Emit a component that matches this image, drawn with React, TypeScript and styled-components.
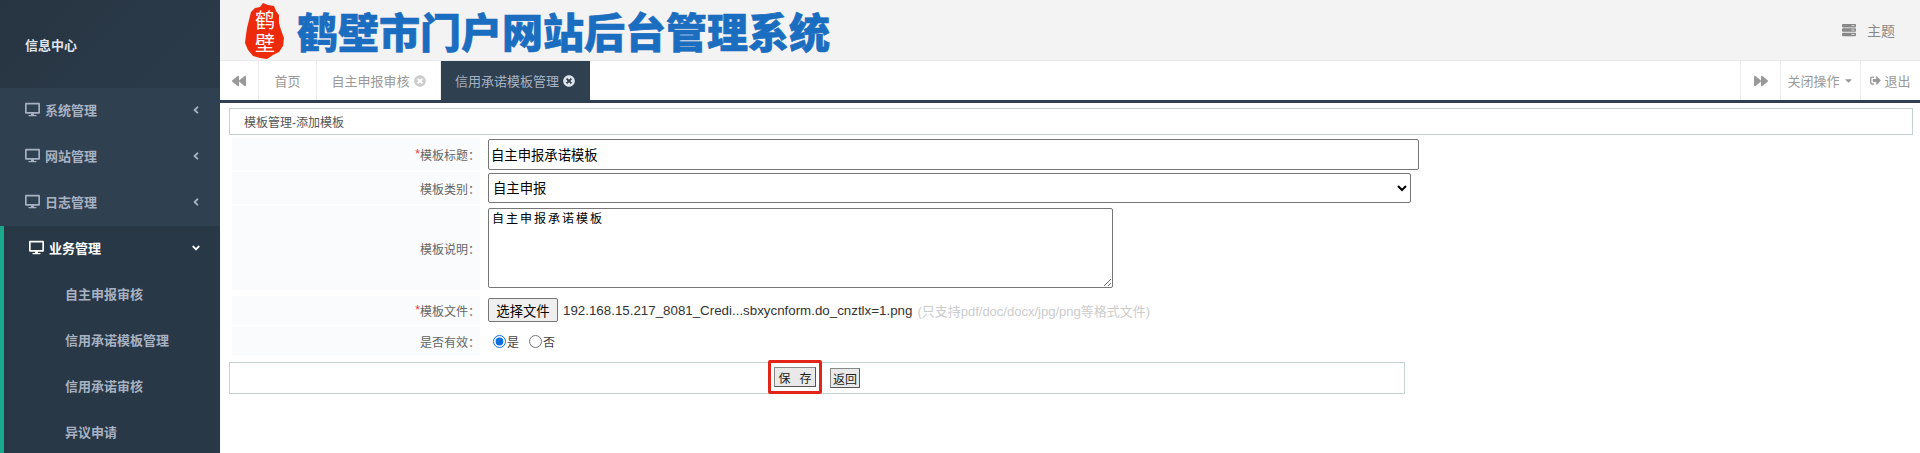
import { createGlobalStyle, styled } from 'styled-components'
import { FaDesktop, FaBackward, FaForward, FaTimesCircle, FaSignOutAlt, FaAngleLeft, FaAngleDown, FaServer, FaCaretDown } from 'react-icons/fa'

const GlobalStyle = createGlobalStyle`
  html, body {
    margin: 0;
    padding: 0;
    height: 100%;
    overflow: hidden;
    background: #fff;
    font-family: "Liberation Sans", "Noto Sans CJK SC", sans-serif;
    font-size: 12px;
    color: #676a6c;
  }
  * { box-sizing: border-box; }
`

const Page = styled.div`
  display: flex;
  width: 1920px;
  height: 453px;
  overflow: hidden;
`

const Sidebar = styled.nav`
  width: 220px;
  flex: none;
  background: #2f4050;
`

const NavHeader = styled.div`
  height: 88px;
  padding: 37px 25px 0;
  background: linear-gradient(135deg, #273441 0%, #2a3948 60%, #2b3a49 100%);
  color: #dfe4ed;
  font-size: 13px;
  font-weight: 700;
  line-height: 18px;
`

const NavItem = styled.div<{ $active?: boolean }>`
  height: 46px;
  display: flex;
  align-items: center;
  padding: 0 18px 3px 25px;
  font-size: 13px;
  font-weight: 700;
  color: ${(p) => (p.$active ? '#fff' : '#a7b1c2')};
  gap: 5px;
  svg:first-child { font-size: 15px; }
  span { flex: 1; }
  svg:last-child { font-size: 12px; }
`

const ActiveGroup = styled.div`
  border-left: 4px solid #19aa8d;
  background: #293846;
`

const SubItem = styled.div`
  height: 46px;
  padding: 0 0 3px 61px;
  display: flex;
  align-items: center;
  font-size: 13px;
  font-weight: 700;
  color: #a7b1c2;
`

const Main = styled.main`
  flex: 1;
  min-width: 0;
  display: flex;
  flex-direction: column;
`

const Header = styled.header`
  height: 61px;
  flex: none;
  display: flex;
  align-items: center;
  padding: 0 25px 0 24px;
  background: #f3f3f4;
  border-bottom: 1px solid #e7eaec;
`

const Seal = styled.svg`
  width: 41px;
  height: 60px;
  flex: none;
`

const SealText = styled.text`
  writing-mode: vertical-rl;
  font-family: "Noto Sans CJK SC", sans-serif;
  font-size: 20px;
  letter-spacing: 3px;
  fill: #fff;
`

const SiteTitle = styled.h1`
  margin: 0 0 1px 12px;
  font-family: "Noto Sans CJK SC", sans-serif;
  font-size: 41px;
  line-height: 50px;
  font-weight: 900;
  color: #1a6dbf;
  -webkit-text-stroke: 0.6px #1a6dbf;
  white-space: nowrap;
  flex: 1;
`

const ThemeLink = styled.div`
  display: flex;
  align-items: center;
  gap: 11px;
  color: #888;
  font-size: 14px;
  svg { font-size: 14px; }
`

const TabBar = styled.div`
  height: 42px;
  flex: none;
  display: flex;
  background: #fff;
  border-bottom: 3px solid #2f4050;
`

const TabArrow = styled.div<{ $width: number }>`
  width: ${(p) => p.$width}px;
  flex: none;
  display: flex;
  align-items: center;
  justify-content: center;
  color: #999;
  font-size: 14px;
  border-right: 1px solid #eee;
`

const Tab = styled.div<{ $active?: boolean; $width: number }>`
  width: ${(p) => p.$width}px;
  flex: none;
  display: flex;
  align-items: center;
  justify-content: center;
  gap: 4px;
  font-size: 13px;
  color: ${(p) => (p.$active ? '#a7b1c2' : '#999')};
  background: ${(p) => (p.$active ? '#2f4050' : '#fff')};
  border-right: 1px solid ${(p) => (p.$active ? '#2f4050' : '#eee')};
  svg { font-size: 12px; color: ${(p) => (p.$active ? '#dde3ea' : '#ccc')}; }
`

const TabSpacer = styled.div`
  flex: 1;
  border-right: 1px solid #eee;
`

const RightAction = styled.div<{ $width: number }>`
  width: ${(p) => p.$width}px;
  flex: none;
  display: flex;
  align-items: center;
  justify-content: center;
  gap: 3px;
  color: #999;
  font-size: 13px;
  border-right: 1px solid #eee;
  &:last-child { border-right: none; }
  svg { font-size: 11px; }
`

const Content = styled.section`
  flex: 1;
  padding: 5px 7px 0 9px;
  background: #fff;
`

const Crumb = styled.div`
  height: 27px;
  display: flex;
  align-items: center;
  padding-left: 14px;
  border: 1px solid #c3d1d1;
  font-size: 12px;
  color: #555;
`

const Form = styled.form`
  margin-top: 3px;
`

const Row = styled.div<{ $height: number; $gap?: number }>`
  display: grid;
  grid-template-columns: 248px 1fr;
  column-gap: 8px;
  height: ${(p) => p.$height}px;
  margin-bottom: ${(p) => p.$gap ?? 2}px;
  padding-left: 3px;
`

const Label = styled.label`
  display: flex;
  align-items: center;
  justify-content: flex-end;
  background: #f9fbfc;
  font-size: 12px;
  color: #666;
  em { font-style: normal; color: #e33; }
`

const Field = styled.div`
  display: flex;
  align-items: center;
  font-size: 12px;
  color: #333;
`

const TextInput = styled.input`
  width: 931px;
  height: 31px;
  padding: 0 2px;
  border: 1px solid #767676;
  border-radius: 2px;
  font-family: inherit;
  font-size: 13.33px;
  color: #000;
  outline: none;
`

const Select = styled.select`
  width: 923px;
  height: 30px;
  padding-left: 0;
  border: 1px solid #767676;
  border-radius: 2px;
  background: #fff;
  font-family: inherit;
  font-size: 13.33px;
  color: #000;
`

const TextArea = styled.textarea`
  width: 625px;
  height: 80px;
  padding: 2px 3px;
  border: 1px solid #767676;
  border-radius: 2px;
  font-family: "Noto Sans CJK SC", sans-serif;
  font-size: 12px;
  letter-spacing: 2px;
  line-height: 14px;
  color: #000;
  outline: none;
`

const FileButton = styled.button`
  width: 70px;
  height: 24px;
  padding: 0;
  border: 1px solid #767676;
  border-radius: 2px;
  background: #efefef;
  font-family: inherit;
  font-size: 13.33px;
  color: #000;
`

const FileName = styled.span`
  margin-left: 5px;
  font-size: 13.33px;
  color: #333;
`

const Hint = styled.span`
  margin-left: 5px;
  color: #ccc;
  font-size: 13px;
`

const Radio = styled.input`
  width: 13px;
  height: 13px;
  margin: 0 1px 0 5px;
  accent-color: #0f6fdc;
`

const RadioText = styled.span`
  font-size: 12px;
  color: #444;
  margin-right: 5px;
`

const Actions = styled.div`
  width: 1176px;
  height: 32px;
  display: flex;
  align-items: center;
  justify-content: center;
  gap: 8px;
  border: 1px solid #c3d1d1;
  padding-right: 6px;
`

const SaveFrame = styled.div`
  padding: 4px 3px;
  border: 3px solid #e1251b;
  border-radius: 2px;
  display: flex;
  margin-top: -2px;
`

const PlainButton = styled.button<{ $wide?: boolean }>`
  width: ${(p) => (p.$wide ? '42px' : '30px')};
  height: 20px;
  padding: 0;
  display: flex;
  align-items: center;
  justify-content: center;
  gap: ${(p) => (p.$wide ? '9px' : '0')};
  border: 1px solid #888;
  border-right-color: #555;
  border-bottom-color: #555;
  background: #e9e9e9;
  font-family: inherit;
  font-size: 12px;
  white-space: nowrap;
  color: #222;
`

const menus = ['系统管理', '网站管理', '日志管理']
const subMenus = ['自主申报审核', '信用承诺模板管理', '信用承诺审核', '异议申请']

export default function App() {
  return (
    <Page>
      <GlobalStyle />
      <Sidebar>
        <NavHeader>信息中心</NavHeader>
        {menus.map((m) => (
          <NavItem key={m}>
            <FaDesktop />
            <span>{m}</span>
            <FaAngleLeft />
          </NavItem>
        ))}
        <ActiveGroup>
          <NavItem $active>
            <FaDesktop />
            <span>业务管理</span>
            <FaAngleDown />
          </NavItem>
          {subMenus.map((s) => (
            <SubItem key={s}>{s}</SubItem>
          ))}
        </ActiveGroup>
      </Sidebar>
      <Main>
        <Header>
          <Seal viewBox="0 0 41 60">
            <path
              d="M19 3l5 2 6 1 2 5 3 4 0 8 2 7 3 8-1 8-4 6-6 3-6 4-7-1-7-2-5-6-3-7 1-8 1-7 2-8 2-8 4-4 5-1z"
              fill="#ee2a0c"
            />
            <SealText x="21" y="10">鹤壁</SealText>
          </Seal>
          <SiteTitle>鹤壁市门户网站后台管理系统</SiteTitle>
          <ThemeLink>
            <FaServer />
            主题
          </ThemeLink>
        </Header>
        <TabBar>
          <TabArrow $width={39}><FaBackward /></TabArrow>
          <Tab $width={58}>首页</Tab>
          <Tab $width={124}>自主申报审核<FaTimesCircle /></Tab>
          <Tab $active $width={149}>信用承诺模板管理<FaTimesCircle /></Tab>
          <TabSpacer />
          <TabArrow $width={40}><FaForward /></TabArrow>
          <RightAction $width={80}>关闭操作<FaCaretDown /></RightAction>
          <RightAction $width={59}><FaSignOutAlt />退出</RightAction>
        </TabBar>
        <Content>
          <Crumb>模板管理-添加模板</Crumb>
          <Form>
            <Row $height={32}>
              <Label><em>*</em>模板标题：</Label>
              <Field><TextInput defaultValue="自主申报承诺模板" /></Field>
            </Row>
            <Row $height={32}>
              <Label>模板类别：</Label>
              <Field>
                <Select defaultValue="自主申报"><option>自主申报</option></Select>
              </Field>
            </Row>
            <Row $height={84} $gap={6}>
              <Label>模板说明：</Label>
              <Field><TextArea defaultValue="自主申报承诺模板" /></Field>
            </Row>
            <Row $height={28} $gap={3}>
              <Label><em>*</em>模板文件：</Label>
              <Field>
                <FileButton type="button">选择文件</FileButton>
                <FileName>192.168.15.217_8081_Credi...sbxycnform.do_cnztlx=1.png</FileName>
                <Hint>(只支持pdf/doc/docx/jpg/png等格式文件)</Hint>
              </Field>
            </Row>
            <Row $height={28} $gap={7}>
              <Label>是否有效：</Label>
              <Field>
                <Radio type="radio" name="valid" defaultChecked />
                <RadioText>是</RadioText>
                <Radio type="radio" name="valid" />
                <RadioText>否</RadioText>
              </Field>
            </Row>
            <Actions>
              <SaveFrame>
                <PlainButton type="button" $wide>
                  <span>保</span>
                  <span>存</span>
                </PlainButton>
              </SaveFrame>
              <PlainButton type="button">返回</PlainButton>
            </Actions>
          </Form>
        </Content>
      </Main>
    </Page>
  )
}
